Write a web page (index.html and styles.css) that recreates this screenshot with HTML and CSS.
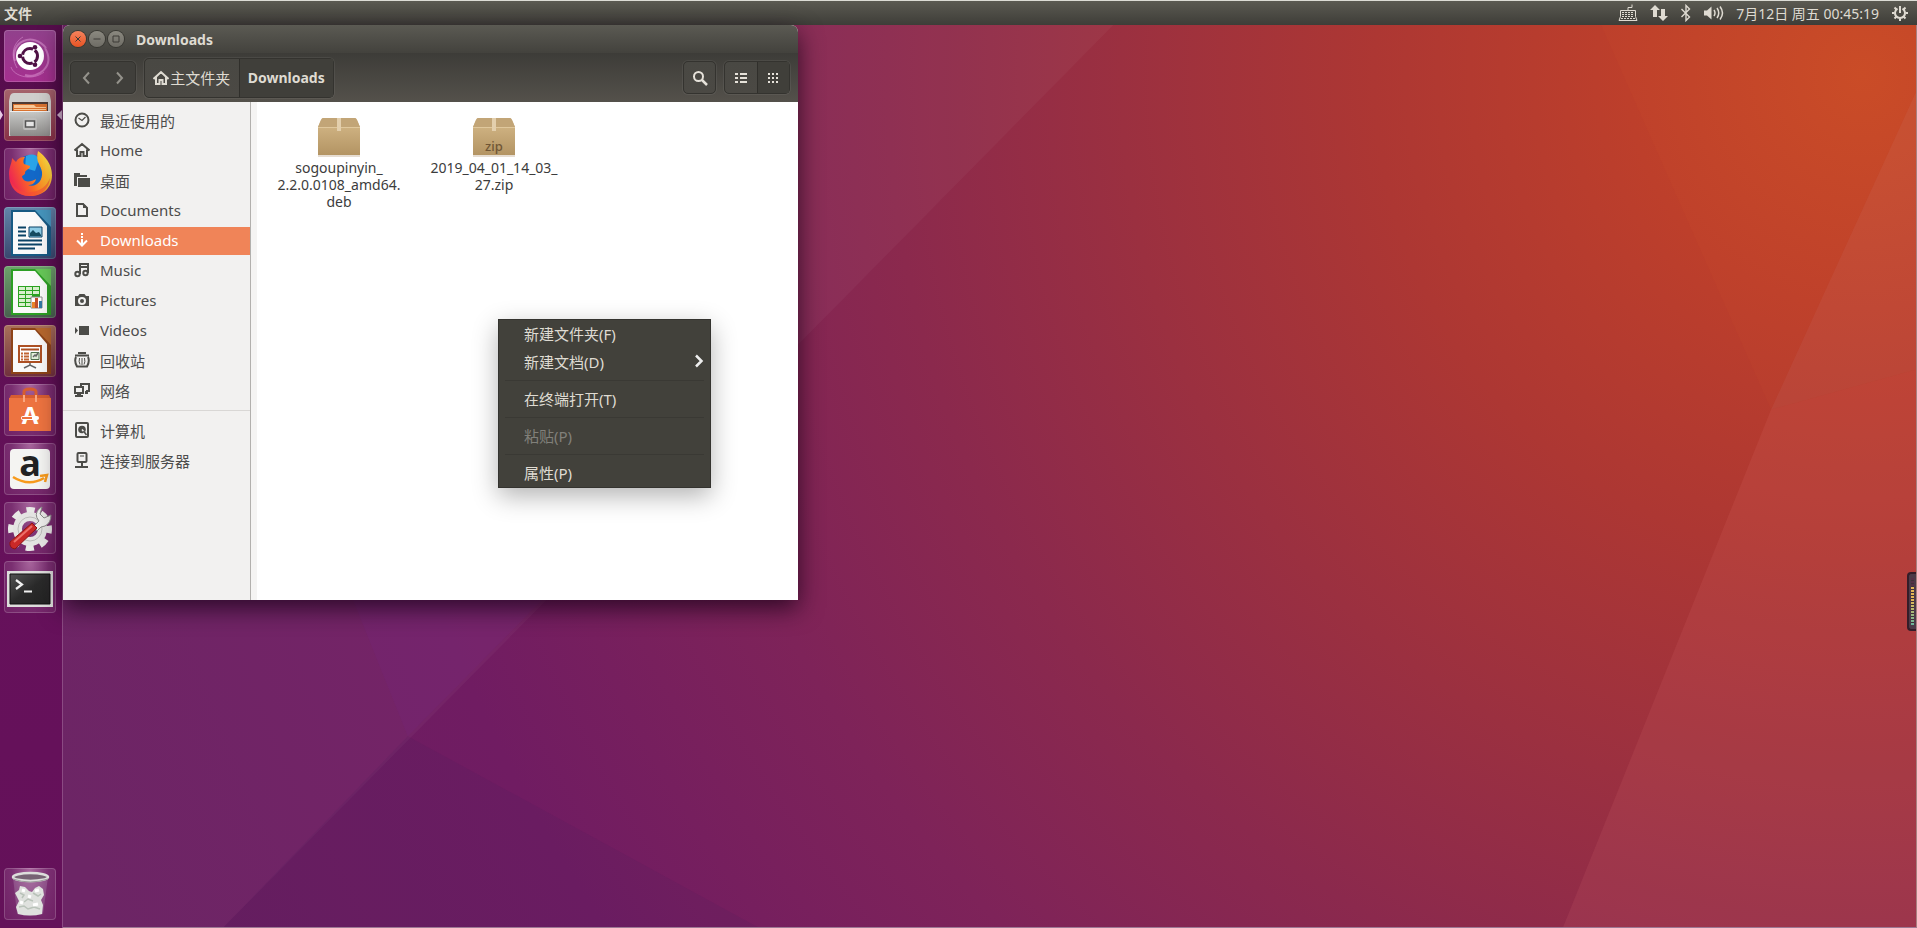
FILE: index.html
```
<!DOCTYPE html>
<html lang="zh-CN">
  <head>
    <meta charset="UTF-8" />
    <meta name="viewport" content="width=device-width, initial-scale=1.0" />
    <title>Downloads</title>
    <link rel="stylesheet" href="styles.css">
  </head>
  <body>
    <header class="panel">
      <h1 class="app-name">文件</h1>
      <div class="indicators">
        <button aria-label="Keyboard"><svg width="20" height="18" viewBox="0 0 20 18" fill="none" stroke="#dfdbd2"><path d="M10 6V3.500h4V.5M2.500 6.500h15v6l1.500 4H1l1.500-4z"/><path d="M4 8.500h12M4 10.500h12M4 12.500h12M3 14.500h14" stroke-width="1.200" stroke-dasharray="2 1"/></svg></button>
        <button aria-label="Network"><svg width="18" height="18" viewBox="0 0 18 18" fill="#dfdbd2"><path d="M5 1l5 5H7v7H3V6H0zM13 17l5-5h-3V5h-4v7H8z"/></svg></button>
        <button aria-label="Bluetooth"><svg width="12" height="18" viewBox="0 0 12 18" fill="none" stroke="#dfdbd2" stroke-width="1.400"><path d="M1.500 5l8 8L6 16.500v-15L9.500 5l-8 8"/></svg></button>
        <button aria-label="Volume"><svg width="20" height="18" viewBox="0 0 20 18" fill="none" stroke="#dfdbd2" stroke-width="1.500"><path d="M0 6.500h3l4.500-4v13l-4.500-4H0z" fill="#dfdbd2" stroke="none"/><path d="M10 6q2 3 0 6M13 4q3.500 5 0 10M16 2.500q5 6.500 0 13"/></svg></button>
        <time>7月12日 周五 00:45:19</time>
        <button aria-label="Session"><svg width="18" height="18" viewBox="0 0 18 18" fill="none" stroke="#dfdbd2" stroke-width="2"><path d="M6.500 4.700a5 5 0 105 0M9 2v7"/><path d="M3.500 3.500l2 2m9-2l-2 2M1 9h2.500m11 0H17M3.500 14.500l2-2m9 2l-2-2M9 14.500V17"/></svg></button>
      </div>
    </header>

    <div class="workspace">
      <nav class="launcher">
        <button class="tile dash" aria-label="Dash">
          <svg viewBox="0 0 52 52"><g fill="none" stroke="#e9a8df" stroke-opacity=".45"><path d="M11 31C5 12 29 1 42 18M41 18c11 19-8 31-20 27" stroke-width="2"/><path d="M7 37c3 10 22 14 33 5M19 7c-10 6-13 18-6 31" /></g><circle cx="26" cy="26" r="14" fill="#fff"/><g fill="none" stroke="#4f1145"><circle cx="26" cy="26" r="7.500" stroke-width="3" stroke-dasharray="13.700 2" stroke-dashoffset="6.800"/></g><g fill="#4f1145"><circle cx="16" cy="26" r="2.300"/><circle cx="31" cy="17.300" r="2.300"/><circle cx="31" cy="34.700" r="2.300"/></g></svg>
        </button>
        <button class="tile files active" aria-label="Files">
          <svg viewBox="0 0 52 52"><defs><linearGradient id="steel" x2="0" y2="1"><stop stop-color="#c9c9c7"/><stop offset="1" stop-color="#8c8b89"/></linearGradient></defs><path d="M10 4h32q3 0 4 3l1 5v35H5V12l1-5q1-3 4-3z" fill="#cfcecc"/><path d="M8 13h36v10H8z" fill="#4f3b34"/><path d="M9 15h34v7H9z" fill="#d9722f"/><path d="M10 16h20l2 2h10v1H10zM10 20h32v1H10z" fill="#f8c795"/><path d="M6 22h40v24q0 1-1 1H7q-1 0-1-1z" fill="url(#steel)"/><path d="M6 22.500h40" stroke="#eee"/><rect x="19" y="29" width="14" height="12" rx="2" fill="#bdbcbb"/><rect x="21.500" y="32" width="9" height="6" fill="#e4e4e4" stroke="#555" stroke-width="1.500"/></svg>
        </button>
        <button class="tile" aria-label="Firefox">
          <svg viewBox="0 0 52 52"><defs><linearGradient id="fox" x1="0" y1=".6" x2="1" y2=".2"><stop stop-color="#ed2255"/><stop offset=".4" stop-color="#fa6a24"/><stop offset=".75" stop-color="#fdb52b"/><stop offset="1" stop-color="#fff04f"/></linearGradient></defs><circle cx="27" cy="24" r="17" fill="#1368c8"/><path d="M22 8q9-4 13 3l-4 12-10-3z" fill="#29a4e8"/><path d="M34 3c7 5 14 13 14 24 0 13-9 21-22 21S5 40 5 26c0-7 3-11 3-16l4 4c2-4 5-5 9-5-2 3-2 5-1 7l6 2c0 3-3 3-5 6 1 3-3 3-3 5 2 6 9 5 14 2-1 5-5 6-8 6 8 3 15-4 14-13-1-7-7-10-4-21z" fill="url(#fox)"/><path d="M6 30c2 10 12 16 22 14 8-1 15-6 18-14-1 11-9 18-20 18S7 41 6 30z" fill="#f44a36" opacity=".55"/></svg>
        </button>
        <button class="tile writer" aria-label="Writer">
          <svg viewBox="0 0 52 52"><path d="M7 3h28l12 14v32H7z" fill="#185a83"/><path d="M31 3h16v17z" fill="#4695bd"/><path d="M9 5h22l12 14v28H9z" fill="#fafafa"/><path d="M14 20.500h8M14 24.500h8M14 28.500h8M14 33.500h24M14 37.500h24M14 41.500h17" stroke="#0a4366" stroke-width="2"/><path d="M25 20h13v10H25z" fill="#8ecce6" stroke="#0a4366"/><path d="M26 29v-3l3-3 3 3 3-1 2 3v1z" fill="#164b60"/></svg>
        </button>
        <button class="tile calc" aria-label="Calc">
          <svg viewBox="0 0 52 52"><path d="M7 3h28l12 14v32H7z" fill="#2d9f25"/><path d="M31 3h16v17z" fill="#67c858"/><path d="M9 5h22l12 14v28H9z" fill="#fafafa"/><path d="M14 20h22v21H14z" fill="#2ba321"/><path d="M15 21h6v3h-6zm7 0h6v3h-6zm7 0h6v3h-6zM15 25h6v3h-6zm7 0h6v3h-6zm7 0h6v3h-6zM15 29h6v3h-6zm7 0h6v3h-6zM15 33h6v3h-6zm7 0h6v3h-6zM15 37h6v3h-6zm7 0h6v3h-6z" fill="#d8efcd"/><path d="M27 31h11v11H27z" fill="#fff" stroke="#888"/><path d="M28 36h3v6h-3z" fill="#e8842a"/><path d="M31 32h3v10h-3z" fill="#c1502d"/><path d="M35 35h3v7h-3z" fill="#3478a5"/></svg>
        </button>
        <button class="tile impress" aria-label="Impress">
          <svg viewBox="0 0 52 52"><path d="M7 3h28l12 14v32H7z" fill="#8d4318"/><path d="M31 3h16v17z" fill="#b5672d"/><path d="M9 5h22l12 14v28H9z" fill="#fafafa"/><path d="M15 21h22v16H15z" fill="#fff" stroke="#ad5024" stroke-width="2"/><path d="M17 24.500h18" stroke="#ad5024" stroke-width="2"/><path d="M17 28.500h8M17 31.500h8M17 34.500h8" stroke="#c16533" stroke-width="2" stroke-dasharray="2 1 5"/><path d="M27 27.500h8v7h-8z" fill="#e3efdb" stroke="#4f724c"/><path d="M29 32l2-2 1 1 2-3M26 38v3m-6 2l6-3 6 3" fill="none" stroke="#656565" stroke-width="1.500"/></svg>
        </button>
        <button class="tile" aria-label="Software">
          <svg viewBox="0 0 52 52"><path d="M20 17V8q0-3 6-3t6 3v9" fill="none" stroke="#d65d30" stroke-width="3"/><path d="M7 11h38l2 4H5z" fill="#d65c31"/><path d="M5 14h42v33H5z" fill="#ed7340"/><path d="M20 18v-7m12 7v-7" stroke="#f9a780" stroke-width="2"/><text x="26" y="40" text-anchor="middle" class="store-letter">A</text><rect x="17" y="32" width="18" height="4" rx="2" fill="#fff"/><path d="M18 34h10" stroke="#ed7340" stroke-width="2"/></svg>
        </button>
        <button class="tile" aria-label="Amazon">
          <svg viewBox="0 0 52 52"><rect x="6" y="6" width="40" height="40" rx="4" fill="#f4f4f2"/><text x="26" y="33" text-anchor="middle" class="shop-letter">a</text><path d="M9 34q16 10 31 1M36 33l7-1-2 7" fill="none" stroke="#f79a1c" stroke-width="2.500"/></svg>
        </button>
        <button class="tile" aria-label="Settings">
          <svg viewBox="0 0 52 52"><circle cx="26" cy="27" r="18.500" fill="none" stroke="#e8e8e6" stroke-width="7" stroke-dasharray="8 6.530" stroke-dashoffset="4"/><circle cx="26" cy="27" r="12.500" fill="none" stroke="#e4e4e2" stroke-width="9"/><circle cx="26" cy="27" r="12" fill="none" stroke="#bcbcba"/><path d="M30 24l5-5q-6-7 1-13l2-1-2 7 4 4 7-3q0 8-6 11l-4 1-4 4z" fill="#ededeb" stroke="#898987"/><path d="M28 21l5 5-22 21q-6-1-5-7z" fill="#ca2928" stroke="#8e1515"/><path d="M10 40l18-16" stroke="#ed716a" stroke-width="2"/></svg>
        </button>
        <button class="tile" aria-label="Terminal">
          <svg viewBox="0 0 52 52"><defs><linearGradient id="screen" x2="1" y2="1"><stop stop-color="#515151"/><stop offset=".5" stop-color="#2a2a2a"/><stop offset="1" stop-color="#222"/></linearGradient></defs><path d="M3 10h46v36H3z" fill="#dededc"/><path d="M6 13h40v30H6z" fill="url(#screen)" stroke="#111"/><path d="M12 19l6 4.500-6 4.500M20 30.500h8" fill="none" stroke="#f1f1f1" stroke-width="2.200"/></svg>
        </button>
        <button class="tile trash" aria-label="Trash">
          <svg viewBox="0 0 52 52"><path d="M9 9h35l-5 37q-13 3-26 0z" fill="#d7d1df" opacity=".2"/><path d="M11 25l4-3 1-4 5 1 4 4 3 1 3-4 4-2 4 3 1 6-3 5 2 5-1 9q-12 3-24 0l-2-7 3-6z" fill="#dfe1de"/><path d="M16 25l4 2-2 3m11-5l5 3 3-2M20 34l4-3 5 2M15 39l5-1 4 3 6-2 6 2" fill="none" stroke="#b9c2b9" stroke-width="1.500"/><path d="M18 22l3 1m10 0l4-1M16 34l3 1m10 2l5-1M24 28l3 1" stroke="#fff" stroke-width="3" fill="none"/><ellipse cx="26.500" cy="9" rx="17.500" ry="4" fill="#776374" stroke="#dddedc" stroke-width="2.500"/><path d="M9 11q17 6 35 0" fill="none" stroke="#9c9b9b"/></svg>
        </button>
      </nav>

      <main class="desktop">
        <svg class="wallpaper" viewBox="0 0 1854 903" preserveAspectRatio="none" aria-hidden="true">
          <defs><radialGradient id="sunset" gradientUnits="userSpaceOnUse" cx="1800" cy="50" r="1950"><stop stop-color="#c84a27"/><stop offset=".12" stop-color="#bd3f2b"/><stop offset=".25" stop-color="#ad3733"/><stop offset=".38" stop-color="#9b3040"/><stop offset=".5" stop-color="#8b294d"/><stop offset=".62" stop-color="#7e2359"/><stop offset=".78" stop-color="#701c62"/><stop offset="1" stop-color="#671e60"/></radialGradient></defs>
          <path d="M0 0h1854v903H0z" fill="url(#sunset)"/>
          <path d="M0 0h1051L161 903H0z" fill="#fff" opacity=".035"/>
          <path d="M290 575h190L345 712z" fill="#7828a0" opacity=".1"/>
          <path d="M345 712l350 191H161z" fill="#46205d" opacity=".13"/>
          <path d="M1539 0h315v67l-145 318z" fill="#ff8a33" opacity=".04"/>
          <path d="M1854 67v278l-145 40z" fill="#fff" opacity=".05"/>
          <path d="M1854 345v558h-353l208-518z" fill="#f48c8c" opacity=".1"/>
        </svg>

        <section class="window">
          <div class="titlebar">
            <button class="control close" aria-label="Close"><svg width="16" height="16" viewBox="0 0 16 16"><path d="M5.500 5.500l5 5m0-5l-5 5"/></svg></button>
            <button class="control" aria-label="Minimize"><svg width="16" height="16" viewBox="0 0 16 16"><path d="M4.500 8h7"/></svg></button>
            <button class="control" aria-label="Maximize"><svg width="16" height="16" viewBox="0 0 16 16"><path d="M5 5h6v6H5z"/></svg></button>
            <h2>Downloads</h2>
          </div>
          <div class="toolbar">
            <div class="group history">
              <button aria-label="Back"><svg width="12" height="14" viewBox="0 0 12 14"><path d="M8 1.500L3 7l5 5.500"/></svg></button>
              <button aria-label="Forward"><svg width="12" height="14" viewBox="0 0 12 14"><path d="M4 1.500L9 7l-5 5.500"/></svg></button>
            </div>
            <div class="group path">
              <button><svg width="16" height="16" viewBox="0 0 16 16" fill="none" stroke="#dfdbd2" stroke-width="2"><path d="M.5 9L8 2l7.500 7M3 7v7h3.500v-4h3v4H13V7"/></svg>主文件夹</button>
              <button class="current">Downloads</button>
            </div>
            <div class="group search">
              <button aria-label="Search"><svg width="16" height="16" viewBox="0 0 16 16" fill="none" stroke="#e6e2da"><circle cx="6.500" cy="6.500" r="4.500" stroke-width="2"/><path d="M10 10l5 5" stroke-width="2.500"/></svg></button>
            </div>
            <div class="group views">
              <button aria-label="List view"><svg width="12" height="12" viewBox="0 0 12 12" fill="#e6e2da"><path d="M0 1h3v2H0zm5 0h7v2H5zM0 5h3v2H0zm5 0h7v2H5zM0 9h3v2H0zm5 0h7v2H5z"/></svg></button>
              <button class="current" aria-label="Icon view"><svg width="12" height="12" viewBox="0 0 12 12" fill="#e6e2da"><path d="M1 1h2v2H1zm4 0h2v2H5zm4 0h2v2H9zM1 5h2v2H1zm4 0h2v2H5zm4 0h2v2H9zM1 9h2v2H1zm4 0h2v2H5zm4 0h2v2H9z"/></svg></button>
            </div>
          </div>

          <div class="content">
            <nav class="sidebar">
              <a href="#"><svg viewBox="0 0 16 16"><circle cx="8" cy="8" r="6.500"/><path d="M4.500 6L8 8.500 11.500 5" stroke-width="1.200"/></svg>最近使用的</a>
              <a href="#"><svg viewBox="0 0 16 16"><path d="M.5 8.500L8 2l7.500 6.500M3 7.500V14h3.500v-4h3v4H13V7.500"/></svg>Home</a>
              <a href="#"><svg viewBox="0 0 16 16"><path class="solid" d="M0 1h6v2h7v2H3v9H0zM4 6h12v9H4z"/></svg>桌面</a>
              <a href="#"><svg viewBox="0 0 16 16"><path d="M3 2h6l4 4v8H3z"/><path class="solid" d="M9 1l5 5H9z"/></svg>Documents</a>
              <a href="#" class="selected"><svg viewBox="0 0 16 16"><path d="M8 1v2m0 1v2m0 1v6M3 8.500l5 5 5-5"/></svg>Downloads</a>
              <a href="#"><svg viewBox="0 0 16 16"><circle cx="3.500" cy="12" r="2.200"/><circle cx="11.500" cy="11" r="2.200"/><path d="M6 12V2h8v9M6 5h8"/></svg>Music</a>
              <a href="#"><svg viewBox="0 0 16 16"><path class="solid" fill-rule="evenodd" d="M1 4h3l1.500-2h5L12 4h3v10H1zm7 1a4 4 0 100 8 4 4 0 000-8z"/><circle class="solid" cx="8" cy="9" r="2"/></svg>Pictures</a>
              <a href="#"><svg viewBox="0 0 16 16"><path class="solid" d="M5 4h10v9H5zM1 5l3 3.500L1 12z"/></svg>Videos</a>
              <a href="#"><svg viewBox="0 0 16 16"><path d="M1 3.500h14M4 1h8M2 5q-2 4 1 9.500h10q3-5.500 1-9.500"/><path d="M5.500 6q-1 4 .5 6.500m4.500-6.500q1 4-.5 6.500M8 6v7" stroke-width="1"/></svg>回收站</a>
              <a href="#"><svg viewBox="0 0 16 16"><path d="M7 4V2h8v7h-3M1 5h8v6H1z"/><path class="solid" d="M3 11h4v2h2v2H1v-2h2zm8-2h3v3h-3z"/></svg>网络</a>
              <hr>
              <a href="#"><svg viewBox="0 0 16 16"><rect x="2" y="1" width="12" height="14" rx="1"/><circle class="solid" cx="8" cy="7.500" r="3.800"/><path d="M8 7.500l4 4.500" stroke="#f2f1f0" stroke-width="1.500"/><path d="M9.500 9l3 4" stroke-width="1.500"/></svg>计算机</a>
              <a href="#"><svg viewBox="0 0 16 16"><rect x="3.500" y="1" width="9" height="9" rx="1"/><path d="M6 4h4" stroke-width="1"/><path d="M8 10v4M1 15h13"/></svg>连接到服务器</a>
            </nav>

            <div class="files-view">
              <a href="#" class="file">
                <svg width="44" height="40" viewBox="0 0 44 40"><defs><linearGradient id="box" x2="0" y2="1"><stop stop-color="#d6ba8a"/><stop offset="1" stop-color="#b39463"/></linearGradient></defs><path d="M1 38h42v2H1z" fill="#e6ddd2"/><path d="M6 1h32q1 0 2 2l3 7v28H1V10l3-7q1-2 2-2z" fill="url(#box)"/><path d="M6 1h32q1 0 2 2l3 7H1l3-7q1-2 2-2z" fill="#c2a577"/><path d="M1 10.500h42" stroke="#e0c89d"/><path d="M20 1h4v13h-4z" fill="#e3cfad"/></svg>
                <span>sogoupinyin_<br>2.2.0.0108_amd64.<br>deb</span>
              </a>
              <a href="#" class="file">
                <svg width="44" height="40" viewBox="0 0 44 40"><path d="M1 38h42v2H1z" fill="#e6ddd2"/><path d="M6 1h32q1 0 2 2l3 7v28H1V10l3-7q1-2 2-2z" fill="url(#box)"/><path d="M6 1h32q1 0 2 2l3 7H1l3-7q1-2 2-2z" fill="#c2a577"/><path d="M1 10.500h42" stroke="#e0c89d"/><path d="M20 1h4v13h-4z" fill="#e3cfad"/><text x="22" y="34" text-anchor="middle" class="zip-label">zip</text></svg>
                <span>2019_04_01_14_03_<br>27.zip</span>
              </a>
            </div>
          </div>
        </section>

        <div class="context-menu">
          <button>新建文件夹(F)</button>
          <button>新建文档(D)<svg width="10" height="14" viewBox="0 0 10 14" fill="none" stroke="#eee" stroke-width="2.500"><path d="M2 1.500L7.500 7 2 12.500"/></svg></button>
          <hr>
          <button>在终端打开(T)</button>
          <hr>
          <button disabled>粘贴(P)</button>
          <hr>
          <button>属性(P)</button>
        </div>

        <div class="meter"></div>
      </main>
    </div>
  </body>
</html>
```

FILE: styles.css
```
* {
  margin: 0;
  padding: 0;
  box-sizing: border-box;
}
body {
  height: 100vh;
  display: flex;
  flex-direction: column;
  overflow: hidden;
  background: #681d61;
  font-family: "Noto Sans", "Noto Sans CJK SC", sans-serif;
  font-size: 15px;
  color: #4c4c4c;
}
button {
  border: 0;
  background: none;
  color: inherit;
  font: inherit;
}
a {
  color: inherit;
  text-decoration: none;
}
svg {
  display: block;
  flex: none;
}

/* top panel */
.panel {
  height: 25px;
  flex: none;
  display: flex;
  align-items: center;
  justify-content: space-between;
  padding: 0 8px 0 4px;
  border-top: 1px solid #dcdcd5;
  background: linear-gradient(#5b5a52, #3e3d38);
  color: #dfdbd2;
}
.app-name {
  font-size: 14px;
  font-weight: 700;
}
.indicators {
  display: flex;
  align-items: center;
  gap: 12px;
  font-size: 14px;
}

/* launcher */
.workspace {
  flex: 1;
  min-height: 0;
  display: flex;
}
.launcher {
  width: 63px;
  flex: none;
  display: flex;
  flex-direction: column;
  gap: 7px;
  padding: 5px 0 8px 4px;
  background: linear-gradient(#560d4c, #66115b 60%, #641159);
  border-right: 1px solid #8b4a83;
}
.tile {
  position: relative;
  width: 52px;
  height: 52px;
  border-radius: 4px;
  background: radial-gradient(ellipse at 50% 0, #a7659c, #7a2f71 50%, #6f2064);
  box-shadow: inset 0 0 0 1px rgba(255, 255, 255, 0.18);
}
.tile svg {
  width: 52px;
  height: 52px;
  overflow: visible;
}
.dash {
  background: linear-gradient(#91418c, #a52f8f);
}
.files {
  background: linear-gradient(#a5646c, #883047);
}
.writer {
  background: linear-gradient(#6386aa, #39476e);
}
.calc {
  background: linear-gradient(#6da46b, #48604f);
}
.impress {
  background: linear-gradient(#a9705a, #70303d);
}
.active::before,
.active::after {
  content: "";
  position: absolute;
  top: 21px;
  border: 5px solid transparent;
}
.active::before {
  left: -4px;
  border-left: 3px solid #e8cbe5;
  border-right: 0;
}
.active::after {
  right: -6px;
  border-right: 5px solid #e8cbe5;
  border-left: 0;
}
.trash {
  margin-top: auto;
}
.store-letter {
  font: 700 24px "Noto Sans", sans-serif;
  fill: #fff;
}
.shop-letter {
  font: 700 36px "Open Sans", sans-serif;
  fill: #222;
}
.zip-label {
  font: 500 13px "Noto Sans", sans-serif;
  fill: #705635;
}

/* desktop */
.desktop {
  position: relative;
  flex: 1;
  min-width: 0;
  border-right: 1px solid #a88080;
  border-bottom: 1px solid #9d7894;
}
.wallpaper {
  position: absolute;
  width: 100%;
  height: 100%;
}
.meter {
  position: absolute;
  right: 0;
  top: 547px;
  width: 9px;
  height: 59px;
  border: 2px solid #341d29;
  border-right: 0;
  border-radius: 4px 0 0 4px;
  padding: 4px 2px;
  background: #4c3a48;
}
.meter::before {
  content: "";
  display: block;
  height: 100%;
  background: repeating-linear-gradient(transparent 0 2px, #40303a 2px 3px),
    linear-gradient(#543047 20%, #e4b454 20% 45%, #c7ba68 60%, #68b49b);
}

/* file window */
.window {
  position: relative;
  width: 735px;
  height: 575px;
  display: flex;
  flex-direction: column;
  border-radius: 7px 7px 0 0;
  overflow: hidden;
  background: #fff;
  box-shadow: 0 8px 24px rgba(20, 0, 20, 0.75);
}
.titlebar {
  height: 28px;
  flex: none;
  display: flex;
  align-items: center;
  gap: 3px;
  padding-left: 7px;
  background: linear-gradient(#5b5a53, #43423d);
  color: #dfdbd2;
}
.titlebar h2 {
  margin-left: 9px;
  font-size: 14px;
  font-weight: 700;
}
.control {
  width: 16px;
  height: 16px;
  border-radius: 50%;
  background: linear-gradient(#8b8980, #6e6c65);
  box-shadow: 0 0 0 1px #383732;
}
.control svg {
  fill: none;
  stroke: #3c3b37;
}
.close {
  background: linear-gradient(#f6835d, #e65323);
}
.toolbar {
  height: 49px;
  flex: none;
  display: flex;
  align-items: center;
  gap: 8px;
  padding: 0 8px 0 7px;
  background: linear-gradient(#3d3c38, #54514b);
  color: #dfdbd2;
}
.group {
  height: 33px;
  display: flex;
  border: 1px solid #34332f;
  border-radius: 5px;
  background: linear-gradient(#494843, #4b4944);
  box-shadow: 0 0 0 1px rgba(255, 255, 255, 0.06);
}
.group button {
  flex: 1;
  display: flex;
  align-items: center;
  justify-content: center;
}
.group .current {
  background: #403f3a;
  border-left: 1px solid #302f2b;
}
.history {
  width: 66px;
  background: #403f3b;
}
.history svg {
  fill: none;
  stroke: #94928b;
  stroke-width: 2;
}
.path {
  width: 190px;
  height: 40px;
}
.path button {
  gap: 1px;
}
.path .current {
  font-size: 14px;
  font-weight: 700;
}
.search {
  width: 33px;
  margin-left: auto;
}
.views {
  width: 66px;
}
.content {
  flex: 1;
  display: flex;
}
.sidebar {
  width: 188px;
  flex: none;
  display: flex;
  flex-direction: column;
  gap: 2px;
  padding-top: 5px;
  background: #f2f1f0;
  border-right: 1px solid #b2b0ad;
}
.sidebar a {
  height: 28px;
  display: flex;
  align-items: center;
  gap: 10px;
  padding: 0 0 2px 11px;
}
.sidebar svg {
  width: 16px;
  height: 16px;
  fill: none;
  stroke: #4c4c48;
  stroke-width: 2;
}
.sidebar .solid {
  fill: #4c4c48;
  stroke: none;
}
.sidebar .selected {
  background: #f08458;
  color: #fff;
}
.sidebar .selected svg {
  stroke: #fff;
}
.sidebar hr {
  margin: 3px 0 4px;
  border: 0;
  border-top: 1px solid #d9d7d5;
}
.files-view {
  flex: 1;
  display: flex;
  align-items: flex-start;
  gap: 15px;
  padding: 15px 0 0 12px;
  background: #fff;
  border-left: 6px solid #f5f4f3;
}
.file {
  width: 140px;
  display: flex;
  flex-direction: column;
  align-items: center;
  gap: 2px;
  font-size: 14px;
  line-height: 17px;
  text-align: center;
  color: #3c3c3c;
}

/* right click menu */
.context-menu {
  position: absolute;
  left: 435px;
  top: 294px;
  width: 213px;
  background: #42413b;
  border: 1px solid #34332f;
  color: #dfdbd2;
  box-shadow: 0 8px 24px rgba(0, 0, 0, 0.3);
}
.context-menu button {
  width: 100%;
  height: 28px;
  display: flex;
  align-items: center;
  justify-content: space-between;
  padding: 0 6px 2px 25px;
}
.context-menu button:disabled {
  color: #81807a;
}
.context-menu hr {
  margin: 4px 6px;
  border: 0;
  border-top: 1px solid #3a3934;
}
```
